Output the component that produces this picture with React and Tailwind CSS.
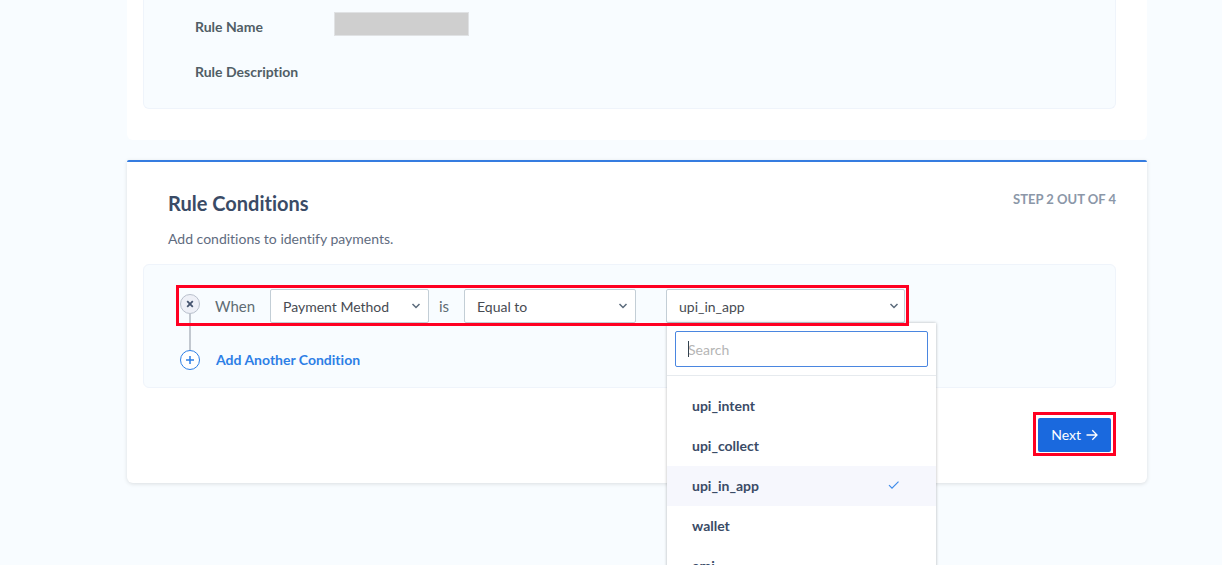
import { useState } from "react";

const METHODS = ["upi_intent", "upi_collect", "upi_in_app", "wallet", "emi"];

function Chevron({ className = "" }) {
  return (
    <svg
      viewBox="0 0 10 10"
      fill="none"
      stroke="#5b6b7c"
      strokeWidth="1.5"
      className={`pointer-events-none size-[10px] shrink-0 ${className}`}
      aria-hidden="true"
    >
      <path d="M1.5 3 L5 6.5 L8.5 3" />
    </svg>
  );
}

function SelectField({ label, options, className }) {
  return (
    <div className={`relative shrink-0 ${className}`}>
      <select
        aria-label={label}
        className="block h-[34px] w-full appearance-none rounded-xs border border-[#c3ced6] bg-white pt-[2px] pl-3 text-sm text-[#474b52]"
      >
        {options.map((option) => (
          <option key={option}>{option}</option>
        ))}
      </select>
      <Chevron className="absolute top-3 right-2" />
    </div>
  );
}

function MethodMenu({ value, onSelect }) {
  return (
    <div className="absolute top-full left-px z-10 w-[269px] bg-white shadow-[0_0_3px_rgba(0,0,0,0.28)]">
      <div className="relative border-b border-[#e6eaee] p-2">
        <input
          type="text"
          aria-label="Search values"
          placeholder="Search"
          className="block h-9 w-full rounded-xs border border-[#4a86e0] bg-white px-3 text-sm text-[#474b52] outline-none placeholder:text-[#b5b5b5]"
        />
        <span className="absolute top-[18px] left-[21px] h-4 w-px bg-[#33424f]" />
      </div>
      <ul role="listbox" aria-label="Values" className="py-[10px]">
        {METHODS.map((method) => (
          <li
            key={method}
            role="option"
            aria-selected={method === value}
            onClick={() => onSelect(method)}
            className={`flex h-10 items-center justify-between pr-9 pl-[25px] text-sm font-bold text-[#3a4b66] ${
              method === value ? "bg-[#f6f7fd]" : ""
            }`}
          >
            {method}
            {method === value && (
              <svg viewBox="0 0 12 12" fill="none" stroke="#3d8bea" strokeWidth="1.2" className="size-3">
                <path d="M1 5.2 L4 8.2 L10.5 1.7" />
              </svg>
            )}
          </li>
        ))}
      </ul>
    </div>
  );
}

export default function App() {
  const [method, setMethod] = useState("upi_in_app");
  const [open, setOpen] = useState(true);

  return (
    <div className="min-h-screen overflow-hidden bg-[#f8fcff] pr-[75px] pb-20 pl-[127px] font-['Lato',sans-serif] [font-variant-ligatures:none]">
      <section className="rounded-b-md bg-white pr-[31px] pb-[31px] pl-4">
        <dl className="rounded-b-md border border-t-0 border-[#eff4fb] bg-[#f8fcff] pt-1 pb-[14px] pl-[51px] text-sm">
          <div className="flex h-[45px] items-center">
            <dt className="w-[139px] font-bold text-[#515e66]">Rule Name</dt>
            <dd className="mb-[6px] h-6 w-[135px] border border-[#e0e2e4] bg-[#cfcfcf]" />
          </div>
          <div className="flex h-[45px] items-center">
            <dt className="w-[139px] font-bold text-[#515e66]">Rule Description</dt>
          </div>
        </dl>
      </section>

      <section className="mt-5 rounded-md rounded-t-xs border-t-2 border-[#357ce0] bg-white pr-[31px] pb-[27px] pl-4 shadow-[0_1px_4px_rgba(0,0,0,0.12)]">
        <header className="flex items-start justify-between pt-[29px] pl-[25px]">
          <div>
            <h2 className="text-xl leading-6 font-bold text-[#3a4b66]">Rule Conditions</h2>
            <p className="mt-3 text-sm leading-6 text-[#5f6c80]">Add conditions to identify payments.</p>
          </div>
          <p className="text-[13px] leading-4 font-bold text-[#8b97a8]">STEP 2 OUT OF 4</p>
        </header>

        <div className="mt-[13px] rounded-md border border-[#eff4fb] bg-[#f8fcff] pt-6 pb-[17px] pl-9">
          <div className="relative flex w-max items-start">
            <div className="mt-[5px] flex w-5 flex-col items-center">
              <button
                aria-label="Remove condition"
                className="flex size-5 items-center justify-center rounded-full border border-[#b9c0cc] bg-[#eef0f7]"
              >
                <svg viewBox="0 0 8 8" fill="none" stroke="#44536e" strokeWidth="1.8" className="size-2">
                  <path d="M1.2 1.2 L6.8 6.8 M6.8 1.2 L1.2 6.8" />
                </svg>
              </button>
              <span className="h-9 w-[2px] bg-[#c2c8d0]" />
            </div>
            <span className="ml-[15px] w-[55px] text-[15px] leading-[34px] text-[#5f6c74]">When</span>
            <SelectField label="Field" options={["Payment Method", "Amount"]} className="w-[159px]" />
            <span className="w-[35px] pl-[10px] text-[15px] leading-[34px] text-[#5f6c74]">is</span>
            <SelectField label="Operator" options={["Equal to", "Not equal to"]} className="w-[172px]" />
            <div className="relative ml-[30px] w-[239px]">
              <button
                aria-haspopup="listbox"
                aria-expanded={open}
                onClick={() => setOpen(!open)}
                className="flex h-[34px] w-full items-center justify-between rounded-xs border border-[#c3ced6] bg-white pr-[5px] pl-3 text-sm text-[#474b52]"
              >
                <span className="pt-[2px]">{method}</span>
                <Chevron />
              </button>
              {open && <MethodMenu value={method} onSelect={setMethod} />}
            </div>
            <span className="pointer-events-none absolute -top-1 -right-1 -left-1 z-20 h-[41px] border-3 border-[#ff0022]" />
          </div>

          <button className="flex items-center text-sm leading-5 font-bold text-[#2d7fe6]">
            <span className="flex size-5 items-center justify-center rounded-full border border-[#2d7fe6] bg-white">
              <svg viewBox="0 0 8 8" fill="none" stroke="#2d7fe6" strokeWidth="1.5" className="size-2">
                <path d="M4 0 V8 M0 4 H8" />
              </svg>
            </span>
            <span className="ml-4">Add Another Condition</span>
          </button>
        </div>

        <div className="mt-6 flex justify-end">
          <div className="border-3 border-[#ff0022] px-[2px] pt-[3px] pb-px">
            <button className="flex h-[34px] items-center gap-[5px] rounded-xs bg-[#1a69de] px-[13px] text-sm text-white">
              Next
              <svg viewBox="0 0 12 12" fill="none" stroke="currentColor" strokeWidth="1.3" className="size-3">
                <path d="M0.5 6 H11 M6.3 1.3 L11 6 L6.3 10.7" />
              </svg>
            </button>
          </div>
        </div>
      </section>
    </div>
  );
}
